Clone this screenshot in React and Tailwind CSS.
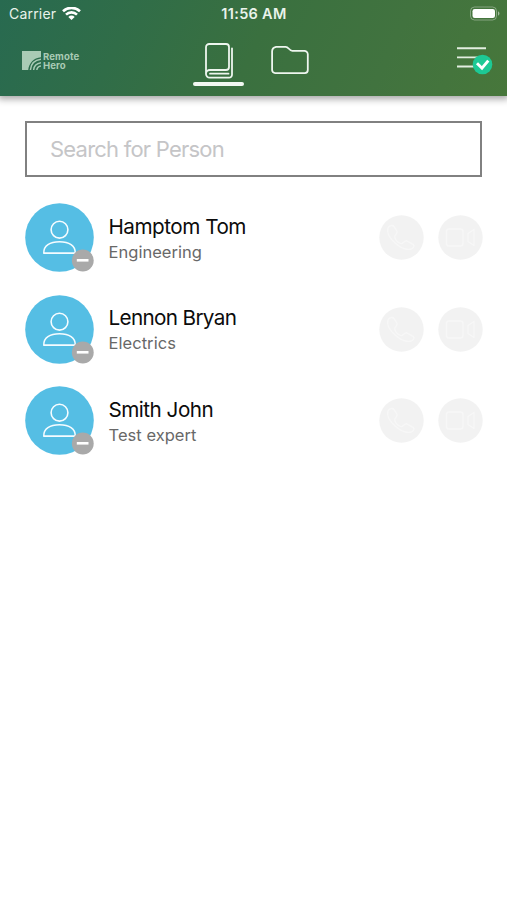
const people = [
  { name: 'Hamptom Tom', role: 'Engineering', nameSpacing: 'tracking-[-0.5px]', roleSpacing: 'tracking-[0.03px]' },
  { name: 'Lennon Bryan', role: 'Electrics', nameSpacing: 'tracking-[-0.66px]', roleSpacing: 'tracking-[0.05px]' },
  { name: 'Smith John', role: 'Test expert', nameSpacing: 'tracking-[-0.52px]', roleSpacing: 'tracking-[0.03px]' },
];

function StatusBar() {
  return (
    <div className="grid h-7 grid-cols-3 items-center pl-[9px] pr-[7px] text-[14px] leading-none text-[#e9f3eb]">
      <div className="flex items-center gap-[6px]">
        <span className="tracking-[0.2px]">Carrier</span>
        <svg width="19" height="15" viewBox="0 0 19 15" fill="none" stroke="#fff" strokeWidth="2.6">
          <path d="M1 4.2a12.4 12.4 0 0 1 17 0" />
          <path d="M4 7.6a8 8 0 0 1 11 0" />
          <path d="M9.5 13.1 6.3 9.9a4.6 4.6 0 0 1 6.4 0Z" fill="#fff" stroke="none" />
        </svg>
      </div>
      <span className="text-center text-[14.5px] font-semibold tracking-[0.3px] -ml-px">11:56 AM</span>
      <svg className="mb-[2px] justify-self-end" width="30" height="15" viewBox="0 0 30 15">
        <rect x=".5" y="1" width="26" height="13" rx="4" fill="none" stroke="#fff" strokeOpacity=".35" />
        <rect x="2.5" y="3" width="22.5" height="9" rx="2.2" fill="#fff" />
        <path d="M28 5.3v4.4c2-.9 2-3.5 0-4.4Z" fill="#fff" fillOpacity=".5" />
      </svg>
    </div>
  );
}

function Logo() {
  return (
    <div className="flex items-center gap-[2px] text-[#a9cbb5]">
      <svg width="19" height="19" viewBox="0 0 19 19">
        <path d="M0 0H19V6.2C11.5 7 7 12 6.2 19H0Z" fill="currentColor" />
        <g fill="none" stroke="currentColor" strokeWidth="1.5">
          <path d="M8.4 19C8.9 13 12.8 9 19 8.3" />
          <path d="M11.6 19C12 15 14.7 12.4 19 11.8" />
          <path d="M14.8 19c.3-2.2 1.8-3.6 4.2-3.9" />
        </g>
      </svg>
      <div className="text-[9.6px] leading-[9px] font-bold tracking-[0.1px]">
        <div>Remote</div>
        <div>Hero</div>
      </div>
    </div>
  );
}

function Header() {
  return (
    <header className="h-24 bg-[linear-gradient(115deg,#286a50_0%,#306d48_25%,#3a703f_50%,#41733f_75%,#47773b_100%)] shadow-[0_1px_7px_2px_rgba(0,0,0,0.36)]">
      <StatusBar />
      <div className="grid grid-cols-[171px_1fr_171px]">
        <div className="pt-[23px] pl-[22px]">
          <Logo />
        </div>
        <nav className="flex pl-[22px]">
          <div className="flex w-[51px] flex-col items-center pt-[14px]">
            <svg width="30" height="38" viewBox="0 0 30 38" fill="none" stroke="#eef6ef" strokeWidth="1.8" strokeLinejoin="round" strokeLinecap="round">
              <path d="M2 32V5.2A3.2 3.2 0 0 1 5.2 2H22a3 3 0 0 1 3 3v20a3 3 0 0 1-3 3H5.8a3.8 3.8 0 0 0 0 7.7H25a3 3 0 0 0 3-3V6.3M6 31.7H24.5" />
            </svg>
            <div className="mt-[2px] h-1 w-[51px] rounded-full bg-[#f2f8f2]" />
          </div>
          <div className="pt-[17px] pl-[27px]">
            <svg width="39" height="30" viewBox="0 0 39 30" fill="none" stroke="#eef6ef" strokeWidth="1.8" strokeLinejoin="round">
              <path d="M1.1 7A5 5 0 0 1 5.1 1.8H14.6C17.8 1.8 18 5.8 21.3 5.8H33.3a3.5 3.5 0 0 1 3.5 3.5V25.1a3 3 0 0 1-3 3H4.1a3 3 0 0 1-3-3Z" />
            </svg>
          </div>
        </nav>
        <div className="flex justify-end pt-[18px] pr-[14px]">
          <svg width="37" height="29" viewBox="0 0 37 29" fill="none">
            <path d="M1 2.3H30M1 11.4H30M1 20.5H24" stroke="#e2eee0" strokeWidth="1.9" />
            <circle cx="26.5" cy="18.5" r="9.8" fill="#1dc995" />
            <path d="m21 17.2 5 5 6.3-7.6" stroke="#fff" strokeWidth="2.9" />
          </svg>
        </div>
      </div>
    </header>
  );
}

function Avatar() {
  return (
    <svg className="shrink-0" width="70" height="70" viewBox="0 0 70 70" fill="none">
      <circle cx="34.5" cy="34.5" r="34.3" fill="#55bee4" />
      <g stroke="#f5fcff" strokeWidth="1.6" strokeLinejoin="round">
        <circle cx="34.5" cy="26.7" r="8.4" />
        <path d="M18.8 50.1C18.4 42.5 25 38.7 34.5 38.7S50.6 42.5 50.2 50.1Z" />
      </g>
      <circle cx="57.8" cy="57.5" r="10.9" fill="#a9a9a9" />
      <path d="M51.8 57.3H63.5" stroke="#fff" strokeWidth="2.6" />
    </svg>
  );
}

function CallButton() {
  return (
    <svg width="45" height="45" viewBox="0 0 45 45" fill="none">
      <circle cx="22.5" cy="22.5" r="22.2" fill="#f2f2f2" />
      <path d="M9 13c1-2.2 4.5-3.5 6-1.5l3 5c.8 2-2.4 3.7-2.3 5.3.1 3 3.7 6.7 6.7 6.8 1.7.1 3.2-3.3 5.3-2.8l6.4 3.5c1.8 1.3.5 3.8-1.5 4.6C23 37 6 22 9 13Z" stroke="#f7f7f7" strokeWidth="1.4" />
    </svg>
  );
}

function VideoButton() {
  return (
    <svg width="45" height="45" viewBox="0 0 45 45" fill="none">
      <circle cx="22.5" cy="22.5" r="22.2" fill="#f2f2f2" />
      <g stroke="#f7f7f7" strokeWidth="1.4" strokeLinejoin="round">
        <rect x="8.5" y="14" width="16.5" height="17" rx="2.5" />
        <path d="m30 18.5 6-4v16l-6-4Z" />
      </g>
    </svg>
  );
}

function Person({ person }) {
  return (
    <li className="flex h-[70px] items-center">
      <Avatar />
      <div className="ml-[13.5px] flex-1 pt-[2px] whitespace-nowrap">
        <div className={`text-[20.7px] leading-[26px] text-[#0c0c0c] ${person.nameSpacing}`}>{person.name}</div>
        <div className={`text-[16.5px] leading-[25px] text-[#686868] ${person.roleSpacing}`}>{person.role}</div>
      </div>
      <div className="-mr-px flex gap-[14px] pb-px">
        <CallButton />
        <VideoButton />
      </div>
    </li>
  );
}

export default function App() {
  return (
    <div className="min-h-[900px] w-full bg-white font-['Inter','Liberation_Sans',sans-serif]">
      <Header />
      <main className="px-[25px] pt-[25px]">
        <input
          className="block h-14 w-full border-[2.5px] border-[#818181] px-[23px] text-[22px] tracking-[-0.78px] outline-none placeholder:text-[#c5c5c7]"
          placeholder="Search for Person"
          aria-label="Search for Person"
        />
        <ul className="mt-[26px] flex flex-col gap-[21.6px]">
          {people.map((person) => (
            <Person key={person.name} person={person} />
          ))}
        </ul>
      </main>
    </div>
  );
}
